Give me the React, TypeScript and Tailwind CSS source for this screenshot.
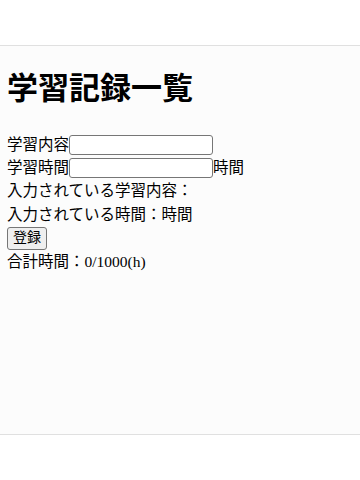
export default function App() {
  return (
    <div
      className="min-h-[480px] bg-white text-black"
      style={{ fontFamily: '"Liberation Serif", "Noto Sans CJK JP", serif' }}
    >
      <div className="h-[45px]" />
      <div className="h-[390px] border-y border-[#e0e0e0] bg-[#fcfcfc] pl-[7px]">
        <h1 className="pt-[24px] pb-[26px] text-[31px] font-bold leading-[37px]">学習記録一覧</h1>
        <div className="text-[15.5px] leading-[23px]">
          <div className="flex items-center h-[23px]">
            <span>学習内容</span>
            <input className="w-[144px] h-[20px] border border-[#767676] rounded-[3px] bg-white" />
          </div>
          <div className="flex items-center h-[23px]">
            <span>学習時間</span>
            <input className="w-[144px] h-[20px] border border-[#767676] rounded-[3px] bg-white" />
            <span>時間</span>
          </div>
          <p className="h-[23px] flex items-center">入力されている学習内容：</p>
          <p className="h-[24px] flex items-center">入力されている時間：時間</p>
          <div className="h-[24px] flex items-center">
            <button className="w-[40px] h-[23px] text-[14px] border border-[#767676] rounded-[3px] bg-[#efefef] leading-none">
              登録
            </button>
          </div>
          <p className="h-[23px] flex items-center">合計時間：0/1000(h)</p>
        </div>
      </div>
    </div>
  );
}
